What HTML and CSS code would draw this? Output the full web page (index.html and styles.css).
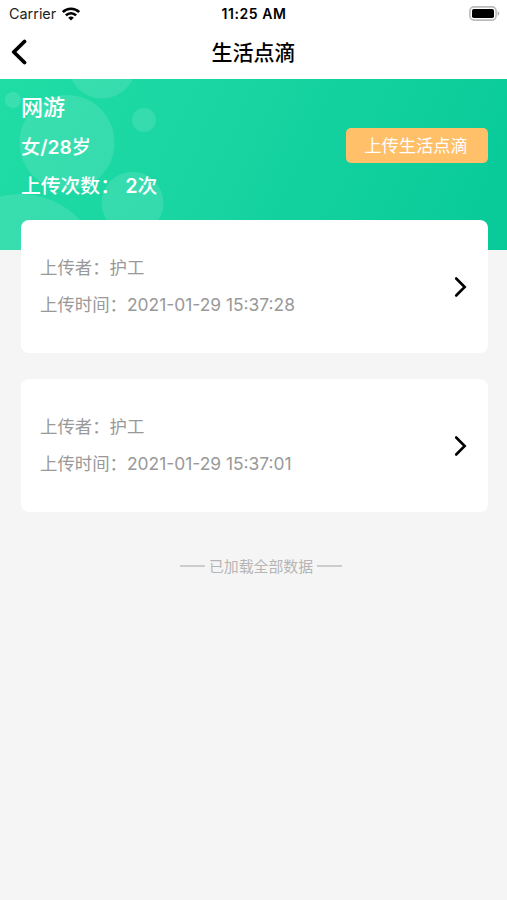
FILE: index.html
```html
<!DOCTYPE html>
<html lang="zh-CN">
<head>
<meta charset="utf-8">
<title>生活点滴</title>
<link rel="stylesheet" href="styles.css">
</head>
<body>
<header class="top">
  <div class="status">
    <div class="carrier"><span>Carrier</span>
      <svg class="wifi" width="18" height="14" viewBox="0 0 18 14" fill="none" stroke="#000" stroke-width="2.7"><path d="M.8 5.1C5.2 .6 12.8 .6 17.200 5.1"/><path d="M3.900 8.400C6.800 5.500 11.200 5.500 14.100 8.400"/><path d="M9 13.500 6.200 10.700Q9 8.500 11.800 10.700Z" fill="#000" stroke="none"/></svg>
    </div>
    <span class="clock">11:25 AM</span>
    <svg class="battery" width="31" height="15" viewBox="0 0 31 15"><rect x=".9" y=".9" width="26.2" height="13.2" rx="4" fill="#fff" stroke="#bbb" stroke-width="1.6"/><rect x="3" y="3" width="22" height="9" rx="1.8"/><path d="M28.700 5q3.200 2.500 0 5z" fill="#aaa"/></svg>
  </div>
  <nav class="nav">
    <svg class="back" width="16" height="26" viewBox="0 0 16 26" fill="none" stroke="#000" stroke-width="3.8" stroke-linecap="round" stroke-linejoin="round"><path d="M13.500 2.500 2.800 13 13.500 23.500"/></svg>
    <h1 class="title">生活点滴</h1>
  </nav>
</header>
<section class="hero">
  <svg class="bubbles" width="507" height="171" viewBox="0 0 507 171" fill="#fff" fill-opacity=".12"><circle cx="102" cy="-14.500" r="34"/><circle cx="13" cy="21" r="8"/><circle cx="67" cy="63.500" r="47.500"/><circle cx="144" cy="41" r="12"/><circle cx="132.500" cy="124" r="31"/><circle cx="20" cy="197" r="82"/></svg>
  <div class="person">
    <p class="name">网游</p>
    <p class="age">女<b>/28</b>岁</p>
    <p class="count">上传次数： <b>2</b>次</p>
  </div>
  <button class="upload">上传生活点滴</button>
</section>
<main class="list">
  <article class="card">
    <div class="info"><p>上传者：护工</p><p>上传时间：2021-01-29 15:37:28</p></div>
    <svg width="14" height="22" viewBox="0 0 14 22" fill="none" stroke="#000" stroke-width="2.6" stroke-linecap="round" stroke-linejoin="miter"><path d="M2.200 2.500 10.700 11 2.200 19.500"/></svg>
  </article>
  <article class="card">
    <div class="info"><p>上传者：护工</p><p>上传时间：2021-01-29 15:37:01</p></div>
    <svg width="14" height="22" viewBox="0 0 14 22" fill="none" stroke="#000" stroke-width="2.6" stroke-linecap="round" stroke-linejoin="miter"><path d="M2.200 2.500 10.700 11 2.200 19.500"/></svg>
  </article>
  <div class="end"><i></i><span>已加载全部数据</span><i></i></div>
</main>
</body>
</html>
```

FILE: styles.css
```css
* { box-sizing: border-box; }
body {
  margin: 0;
  min-height: 900px;
  background: #f5f5f5;
  font-family: Inter, "Noto Sans CJK SC", sans-serif;
}
h1, p { margin: 0; }
svg { display: block; flex: none; }
.top { height: 79px; background: #fff; }
.status {
  display: grid;
  grid-template-columns: 1fr auto 1fr;
  align-items: center;
  height: 27px;
  padding: 0 7px 0 8px;
}
.carrier { display: flex; align-items: center; gap: 6px; color: #222; font-size: 14.4px; }
.carrier span { padding-left: 1px; }
.clock { font-weight: 600; font-size: 14px; letter-spacing: .55px; }
.battery { justify-self: end; }
.nav {
  display: grid;
  grid-template-columns: 16px 1fr 16px;
  align-items: center;
  height: 50px;
  padding: 0 11px;
}
.title { padding-top: 1px; text-align: center; font-size: 21px; line-height: 30px; font-weight: 500; }
.hero {
  position: relative;
  display: flex;
  justify-content: space-between;
  height: 171px;
  padding: 9px 19px 0 21px;
  background: linear-gradient(115deg, #20dca5 0%, #19d5a2 40%, #07ca98 100%);
  color: #fff;
}
.bubbles { position: absolute; left: 0; top: 0; }
.person { position: relative; font-weight: 500; white-space: nowrap; }
.person p { height: 39.5px; line-height: 38px; }
.person b { font-weight: 600; }
.name { font-size: 22px; }
.age { font-size: 19.2px; }
.count { font-size: 19.8px; }
.upload {
  position: relative;
  width: 142px;
  height: 35px;
  margin-top: 40px;
  padding: 1px 2px 0 0;
  border: 0;
  border-radius: 5px;
  background: #ffc069;
  color: #fff;
  font: 17.3px/34px Inter, "Noto Sans CJK SC", sans-serif;
}
.list { position: relative; margin-top: -30px; padding: 0 19px 0 21px; }
.card {
  display: flex;
  align-items: center;
  justify-content: space-between;
  height: 133px;
  margin-bottom: 26px;
  padding: 0 20px 0 19px;
  border-radius: 8px;
  background: #fff;
  color: #999;
  font-size: 17.4px;
  line-height: 37.5px;
}
.info { margin-top: -1px; }
.end {
  display: flex;
  align-items: center;
  justify-content: center;
  gap: 4px;
  height: 24px;
  margin-top: 42px;
  padding-left: 13px;
  color: #b5b5b5;
  font-size: 14.9px;
}
.end span { margin-top: -2px; }
.end i { width: 25px; height: 2px; background: #ccc; }
```
